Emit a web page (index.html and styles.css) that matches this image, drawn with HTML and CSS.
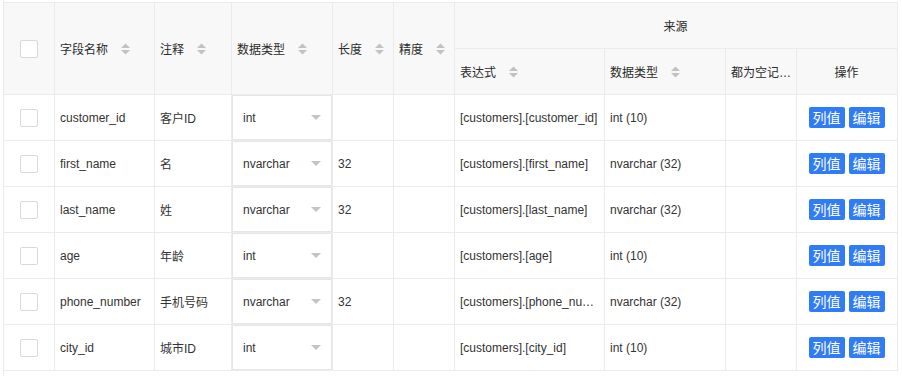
FILE: index.html
```html
<!DOCTYPE html>
<html lang="zh">
<head>
<meta charset="utf-8">
<link rel="stylesheet" href="styles.css">
</head>
<body>
<div class="wrap">
<table class="grid">
<colgroup>
<col style="width:51px"><col style="width:100px"><col style="width:77px"><col style="width:101px"><col style="width:61px"><col style="width:61px"><col style="width:150px"><col style="width:121px"><col style="width:71px"><col style="width:101px">
</colgroup>
<thead>
<tr>
<th rowspan="2" class="chk"><span class="box"></span></th>
<th rowspan="2"><span class="lbl">字段名称<svg class="sort" viewBox="0 0 9 12" width="9" height="12"><path d="M0 5 L4.5 0.5 L9 5 Z"/><path d="M0 7 L4.5 11.5 L9 7 Z"/></svg></span></th>
<th rowspan="2"><span class="lbl">注释<svg class="sort" viewBox="0 0 9 12" width="9" height="12"><path d="M0 5 L4.5 0.5 L9 5 Z"/><path d="M0 7 L4.5 11.5 L9 7 Z"/></svg></span></th>
<th rowspan="2"><span class="lbl">数据类型<svg class="sort" viewBox="0 0 9 12" width="9" height="12"><path d="M0 5 L4.5 0.5 L9 5 Z"/><path d="M0 7 L4.5 11.5 L9 7 Z"/></svg></span></th>
<th rowspan="2"><span class="lbl">长度<svg class="sort" viewBox="0 0 9 12" width="9" height="12"><path d="M0 5 L4.5 0.5 L9 5 Z"/><path d="M0 7 L4.5 11.5 L9 7 Z"/></svg></span></th>
<th rowspan="2"><span class="lbl">精度<svg class="sort" viewBox="0 0 9 12" width="9" height="12"><path d="M0 5 L4.5 0.5 L9 5 Z"/><path d="M0 7 L4.5 11.5 L9 7 Z"/></svg></span></th>
<th colspan="4" class="center">来源</th>
</tr>
<tr>
<th><span class="lbl">表达式<svg class="sort" viewBox="0 0 9 12" width="9" height="12"><path d="M0 5 L4.5 0.5 L9 5 Z"/><path d="M0 7 L4.5 11.5 L9 7 Z"/></svg></span></th>
<th><span class="lbl">数据类型<svg class="sort" viewBox="0 0 9 12" width="9" height="12"><path d="M0 5 L4.5 0.5 L9 5 Z"/><path d="M0 7 L4.5 11.5 L9 7 Z"/></svg></span></th>
<th class="tight"><div class="ell">都为空记录数</div></th>
<th class="center">操作</th>
</tr>
</thead>
<tbody>
<tr>
<td class="chk"><span class="box"></span></td>
<td>customer_id</td><td>客户ID</td>
<td class="sel"><div class="select"><span>int</span><i class="caret"></i></div></td>
<td></td><td></td>
<td class="tight"><div class="ell">[customers].[customer_id]</div></td><td>int (10)</td><td></td>
<td class="center"><span class="ops"><button class="btn">列值</button><button class="btn">编辑</button></span></td>
</tr>
<tr>
<td class="chk"><span class="box"></span></td>
<td>first_name</td><td>名</td>
<td class="sel"><div class="select"><span>nvarchar</span><i class="caret"></i></div></td>
<td>32</td><td></td>
<td class="tight"><div class="ell">[customers].[first_name]</div></td><td>nvarchar (32)</td><td></td>
<td class="center"><span class="ops"><button class="btn">列值</button><button class="btn">编辑</button></span></td>
</tr>
<tr>
<td class="chk"><span class="box"></span></td>
<td>last_name</td><td>姓</td>
<td class="sel"><div class="select"><span>nvarchar</span><i class="caret"></i></div></td>
<td>32</td><td></td>
<td class="tight"><div class="ell">[customers].[last_name]</div></td><td>nvarchar (32)</td><td></td>
<td class="center"><span class="ops"><button class="btn">列值</button><button class="btn">编辑</button></span></td>
</tr>
<tr>
<td class="chk"><span class="box"></span></td>
<td>age</td><td>年龄</td>
<td class="sel"><div class="select"><span>int</span><i class="caret"></i></div></td>
<td></td><td></td>
<td class="tight"><div class="ell">[customers].[age]</div></td><td>int (10)</td><td></td>
<td class="center"><span class="ops"><button class="btn">列值</button><button class="btn">编辑</button></span></td>
</tr>
<tr>
<td class="chk"><span class="box"></span></td>
<td>phone_number</td><td>手机号码</td>
<td class="sel"><div class="select"><span>nvarchar</span><i class="caret"></i></div></td>
<td>32</td><td></td>
<td class="tight"><div class="ell">[customers].[phone_number]</div></td><td>nvarchar (32)</td><td></td>
<td class="center"><span class="ops"><button class="btn">列值</button><button class="btn">编辑</button></span></td>
</tr>
<tr>
<td class="chk"><span class="box"></span></td>
<td>city_id</td><td>城市ID</td>
<td class="sel"><div class="select"><span>int</span><i class="caret"></i></div></td>
<td></td><td></td>
<td class="tight"><div class="ell">[customers].[city_id]</div></td><td>int (10)</td><td></td>
<td class="center"><span class="ops"><button class="btn">列值</button><button class="btn">编辑</button></span></td>
</tr>
</tbody>
</table>
</div>
</body>
</html>
```

FILE: styles.css
```css
html, body {
  margin: 0;
  padding: 0;
  background: #fff;
}
body {
  font-family: "Liberation Sans", "Noto Sans CJK SC", sans-serif;
  font-size: 12px;
  color: #333;
}
.wrap {
  box-sizing: border-box;
  height: 376px;
  margin-left: 3px;
  padding-top: 2px;
  border-left: 1px solid #ebebeb;
}
.grid {
  border-collapse: collapse;
  table-layout: fixed;
  width: 895px;
  margin-left: -1px;
}
.grid th, .grid td {
  border: 1px solid #ebebeb;
  padding: 0 6px 0 5px;
  height: 45px;
  text-align: left;
  vertical-align: middle;
  white-space: nowrap;
  overflow: hidden;
}
.grid .tight {
  padding: 0 3px 0 5px;
}
.grid th {
  background: #f8f8f8;
  font-weight: normal;
  color: #2b2b2b;
}
.grid .center {
  text-align: center;
}
.grid .chk {
  padding: 0;
  text-align: center;
}
.box {
  display: inline-block;
  width: 16px;
  height: 16px;
  border: 1px solid #d9d9d9;
  border-radius: 2px;
  background: #fff;
  vertical-align: middle;
}
.lbl {
  display: inline-flex;
  align-items: center;
  gap: 13px;
}
.sort {
  fill: #c2c2c2;
  flex: none;
}
.ell {
  overflow: hidden;
  text-overflow: ellipsis;
  white-space: nowrap;
}
.grid .sel {
  padding: 0;
}
.select {
  box-sizing: border-box;
  height: 45px;
  border: 1px solid #e6e6e6;
  background: #fff;
  display: flex;
  align-items: center;
  justify-content: space-between;
  padding: 0 10px 0 10px;
}
.caret {
  width: 0;
  height: 0;
  border-left: 5px solid transparent;
  border-right: 5px solid transparent;
  border-top: 5px solid #c4c4c4;
}
.ops {
  display: inline-flex;
  gap: 4px;
  vertical-align: middle;
}
.btn {
  font-family: "Noto Sans CJK SC", sans-serif;
  font-size: 14px;
  line-height: 21px;
  height: 21px;
  width: 36px;
  padding: 0;
  border: 0;
  border-radius: 2px;
  background: #2f7cf6;
  color: #fff;
}
```
